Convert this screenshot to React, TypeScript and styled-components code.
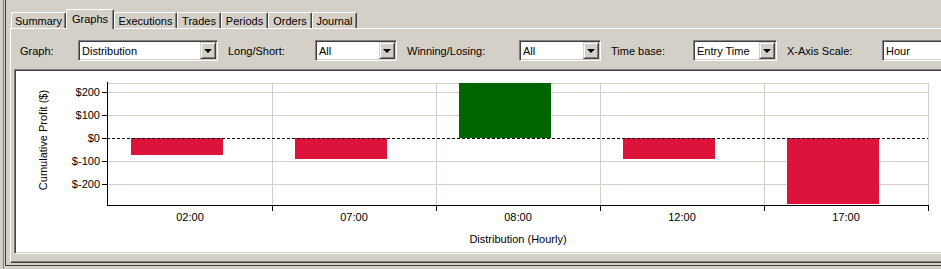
import styled, { createGlobalStyle } from "styled-components";

const GlobalStyle = createGlobalStyle`
  html, body {
    margin: 0;
    padding: 0;
    background: #d4d0c8;
  }
  body {
    font-family: "Liberation Sans", Arial, sans-serif;
    font-size: 11px;
    color: #000;
  }
`;

const tabs = [
  { label: "Summary", width: 55 },
  { label: "Graphs", width: 48 },
  { label: "Executions", width: 63 },
  { label: "Trades", width: 44 },
  { label: "Periods", width: 47 },
  { label: "Orders", width: 44 },
  { label: "Journal", width: 45 },
];

const filters = [
  { label: "Graph:", labelWidth: 58, value: "Distribution", width: 140 },
  { label: "Long/Short:", labelWidth: 87, value: "All", width: 82 },
  { label: "Winning/Losing:", labelWidth: 112, value: "All", width: 82 },
  { label: "Time base:", labelWidth: 82, value: "Entry Time", width: 84 },
  { label: "X-Axis Scale:", labelWidth: 95, value: "Hour", width: 100 },
];

const buckets = [
  { label: "02:00", value: -74 },
  { label: "07:00", value: -91 },
  { label: "08:00", value: 239 },
  { label: "12:00", value: -91 },
  { label: "17:00", value: -287 },
];

// chart geometry, in page pixels
const plot = { left: 107, right: 928, top: 83, bottom: 205, zero: 138 };
const catStart = 108;
const catWidth = 164;
const barOffset = 23;
const barWidth = 92;
const yScale = 0.2305;
const yOf = (v: number) => plot.zero - v * yScale;
const yTicks = [200, 100, 0, -100, -200];

const Root = styled.div`
  width: 941px;
  height: 269px;
  overflow: hidden;
  background: #d4d0c8;
  padding-left: 3px;
  box-sizing: border-box;
`;

const OuterRail = styled.div`
  height: 269px;
  box-sizing: border-box;
  border-left: 1px solid #808080;
  padding-left: 1px;
`;

const Frame = styled.div`
  width: 960px;
  height: 266px;
  box-sizing: border-box;
  border-left: 1px solid #404040;
  border-bottom: 1px solid #404040;
  padding-left: 4px;
  display: flex;
  flex-direction: column;
`;

const TabStrip = styled.div`
  height: 28px;
  box-sizing: border-box;
  padding: 9px 0 0 1px;
  display: flex;
  align-items: flex-end;
`;

const Tab = styled.div<{ $active?: boolean; $width: number }>`
  box-sizing: border-box;
  width: ${({ $width }) => $width}px;
  height: ${({ $active }) => ($active ? 20 : 16)}px;
  margin-bottom: ${({ $active }) => ($active ? -1 : 0)}px;
  padding-bottom: ${({ $active }) => ($active ? 2 : 0)}px;
  position: relative;
  z-index: ${({ $active }) => ($active ? 1 : 0)};
  display: flex;
  align-items: center;
  justify-content: center;
  background: #d4d0c8;
  border-top: 1px solid #fff;
  border-left: 1px solid #fff;
  border-right: 1px solid #404040;
  border-top-left-radius: 2px;
  border-top-right-radius: 2px;
  box-shadow: inset -1px 0 0 #808080;
  white-space: nowrap;
`;

const TabPage = styled.div`
  height: 235px;
  box-sizing: border-box;
  border-top: 1px solid #fff;
  border-left: 1px solid #fff;
  border-bottom: 1px solid #404040;
  box-shadow: inset 0 -1px 0 #808080;
  display: flex;
  flex-direction: column;
`;

const Toolbar = styled.div`
  display: flex;
  align-items: center;
  gap: 10px;
  padding: 11px 0 0 9px;
`;

const Field = styled.div`
  display: flex;
  align-items: center;
`;

const FieldLabel = styled.span<{ $width: number }>`
  width: ${({ $width }) => $width}px;
  white-space: nowrap;
`;

const Combo = styled.div<{ $width: number }>`
  box-sizing: border-box;
  width: ${({ $width }) => $width}px;
  height: 21px;
  display: flex;
  align-items: center;
  background: #fff;
  border-top: 1px solid #808080;
  border-left: 1px solid #808080;
  border-bottom: 1px solid #fff;
  border-right: 1px solid #fff;
  box-shadow: inset 1px 1px 0 #404040, inset -1px -1px 0 #d4d0c8;
`;

const ComboText = styled.span`
  flex: 1;
  padding-left: 3px;
  white-space: nowrap;
`;

const DropButton = styled.span`
  box-sizing: border-box;
  width: 16px;
  height: 17px;
  margin-right: 1px;
  background: #d4d0c8;
  border-top: 1px solid #d4d0c8;
  border-left: 1px solid #d4d0c8;
  border-right: 1px solid #404040;
  border-bottom: 1px solid #404040;
  box-shadow: inset 1px 1px 0 #fff, inset -1px -1px 0 #808080;
  display: flex;
  align-items: center;
  justify-content: center;

  &::after {
    content: "";
    border-left: 4px solid transparent;
    border-right: 4px solid transparent;
    border-top: 4px solid #000;
    margin-top: 1px;
  }
`;

const ChartBox = styled.div`
  box-sizing: border-box;
  height: 185px;
  margin: 8px 0 0 3px;
  background: #fff;
  border-top: 1px solid #808080;
  border-left: 1px solid #808080;
  border-bottom: 1px solid #fff;
  border-right: 1px solid #fff;
  box-shadow: inset 1px 1px 0 #404040, inset 0 -1px 0 #d4d0c8;
  overflow: hidden;
`;

const ChartText = styled.text`
  font-family: "Liberation Sans", Arial, sans-serif;
  font-size: 11px;
  fill: #000;
`;

const px = (v: number) => Math.round(v) + 0.5;

const DistributionChart = () => (
  <svg width={940} height={183} viewBox="15 70 940 183" shapeRendering="crispEdges">
    {/* grid */}
    <line x1={plot.left} x2={plot.right} y1={px(plot.top)} y2={px(plot.top)} stroke="#d4d0c8" />
    {yTicks
      .filter((t) => t !== 0)
      .map((t) => (
        <line key={t} x1={plot.left} x2={plot.right} y1={px(yOf(t))} y2={px(yOf(t))} stroke="#d4d0c8" />
      ))}
    {buckets.map((_, i) => (
      <line
        key={i}
        x1={px(catStart + (i + 1) * catWidth)}
        x2={px(catStart + (i + 1) * catWidth)}
        y1={plot.top}
        y2={plot.bottom}
        stroke="#d4d0c8"
      />
    ))}

    {/* bars */}
    {buckets.map((b, i) => {
      const y = yOf(b.value);
      const top = Math.round(Math.min(y, plot.zero));
      const bottom = Math.round(Math.max(y, plot.zero));
      return (
        <rect
          key={b.label}
          x={catStart + i * catWidth + barOffset}
          y={top}
          width={barWidth}
          height={bottom - top}
          fill={b.value >= 0 ? "#006400" : "#dc143c"}
        />
      );
    })}

    {/* zero line */}
    <line
      x1={plot.left}
      x2={plot.right}
      y1={px(plot.zero)}
      y2={px(plot.zero)}
      stroke="#000"
      strokeDasharray="3 2"
    />

    {/* axes */}
    <line x1={px(plot.left)} x2={px(plot.left)} y1={plot.top - 1} y2={plot.bottom + 1} stroke="#000" />
    <line x1={plot.left} x2={plot.right + 1} y1={px(plot.bottom)} y2={px(plot.bottom)} stroke="#000" />
    {yTicks.map((t) => (
      <g key={t}>
        <line x1={plot.left - 5} x2={plot.left} y1={px(yOf(t))} y2={px(yOf(t))} stroke="#000" />
        <ChartText x={100} y={Math.round(yOf(t)) + 4} textAnchor="end">
          {t < 0 ? `$-${-t}` : `$${t}`}
        </ChartText>
      </g>
    ))}
    {buckets.map((b, i) => (
      <g key={b.label}>
        <line
          x1={px(catStart + (i + 1) * catWidth)}
          x2={px(catStart + (i + 1) * catWidth)}
          y1={plot.bottom}
          y2={plot.bottom + 6}
          stroke="#000"
        />
        <ChartText x={catStart + i * catWidth + catWidth / 2} y={221} textAnchor="middle">
          {b.label}
        </ChartText>
      </g>
    ))}

    <ChartText x={0} y={0} textAnchor="middle" transform="translate(47 140) rotate(-90)">
      Cumulative Profit ($)
    </ChartText>
    <ChartText x={518} y={243} textAnchor="middle">
      Distribution (Hourly)
    </ChartText>
  </svg>
);

const App = () => {
  return (
    <>
      <GlobalStyle />
      <Root>
        <OuterRail>
          <Frame>
            <TabStrip>
              {tabs.map((t) => (
                <Tab key={t.label} $width={t.width} $active={t.label === "Graphs"}>
                  {t.label}
                </Tab>
              ))}
            </TabStrip>
            <TabPage>
              <Toolbar>
                {filters.map((f) => (
                  <Field key={f.label}>
                    <FieldLabel $width={f.labelWidth}>{f.label}</FieldLabel>
                    <Combo $width={f.width}>
                      <ComboText>{f.value}</ComboText>
                      <DropButton />
                    </Combo>
                  </Field>
                ))}
              </Toolbar>
              <ChartBox>
                <DistributionChart />
              </ChartBox>
            </TabPage>
          </Frame>
        </OuterRail>
      </Root>
    </>
  );
};

export default App;
